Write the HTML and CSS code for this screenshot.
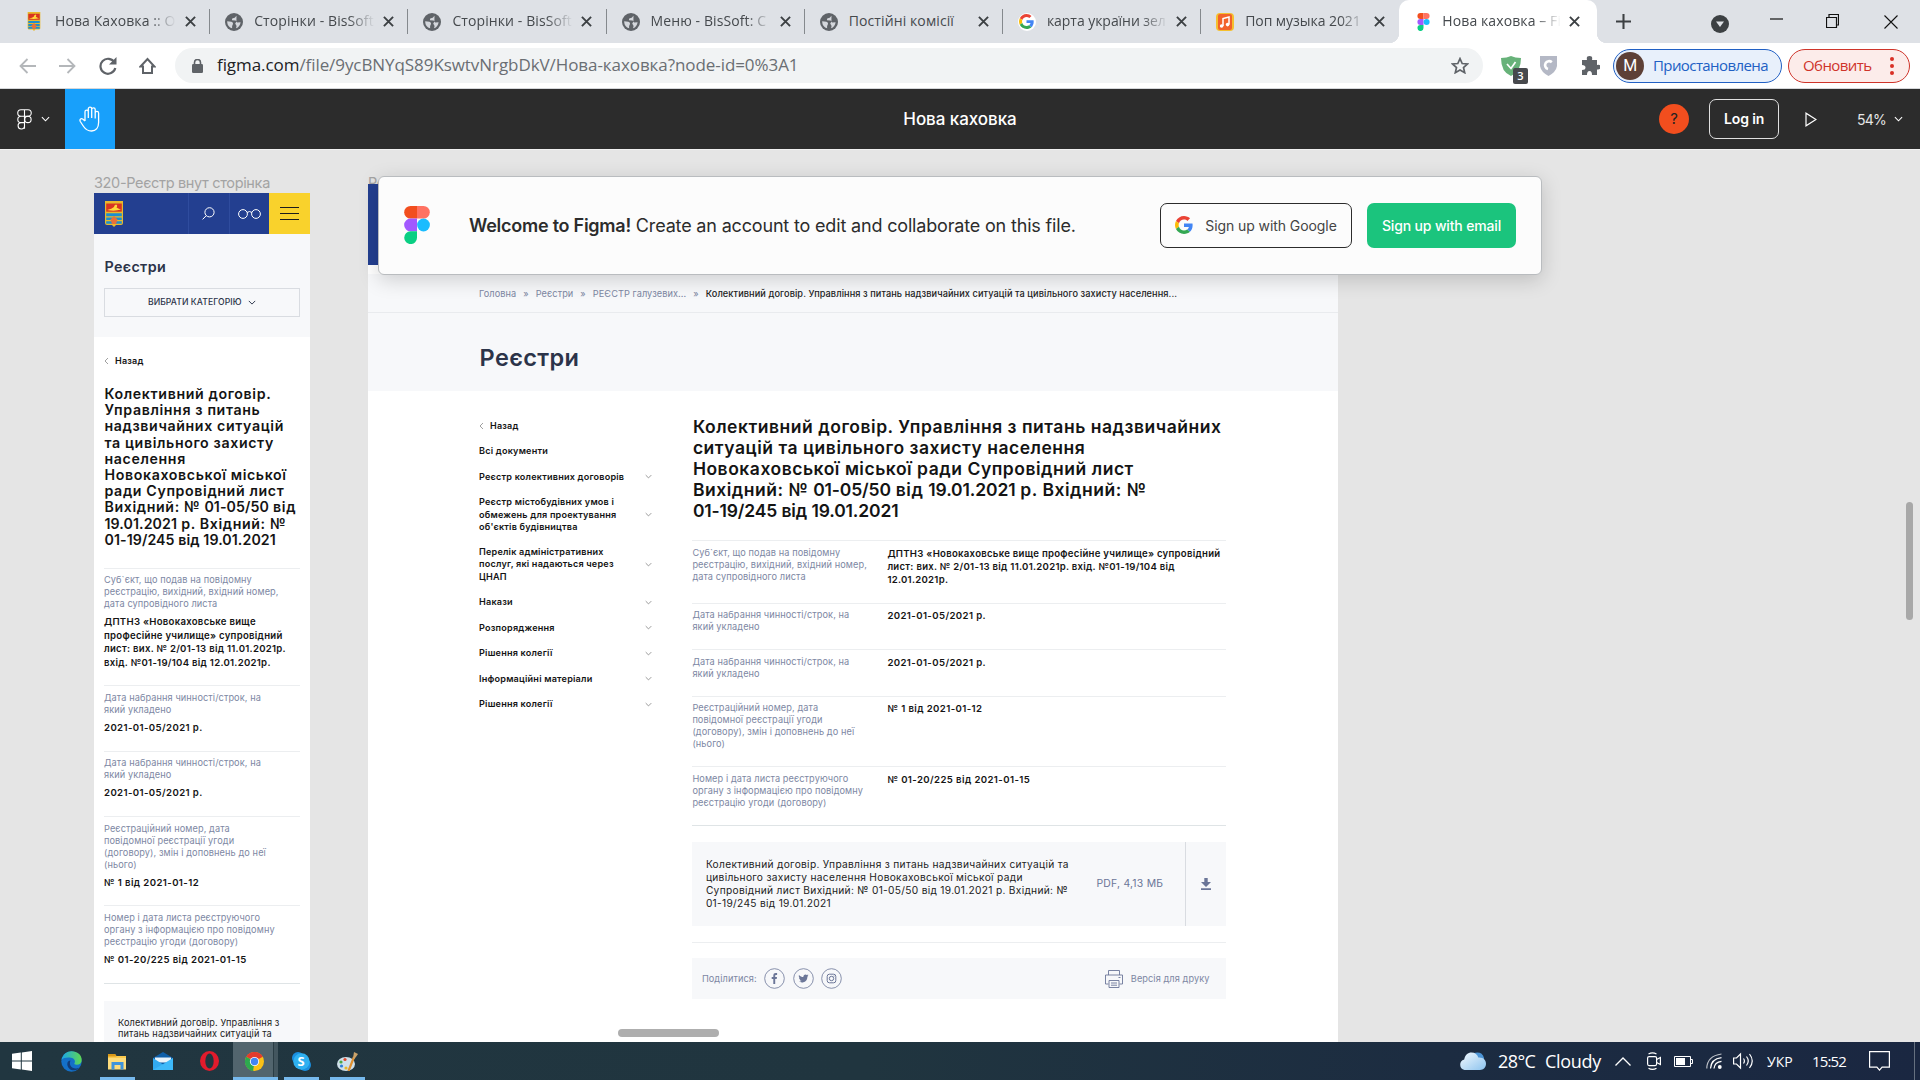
FILE: index.html
```html
<!DOCTYPE html>
<html lang="uk">
<head>
<meta charset="utf-8">
<title>Нова каховка – Figma</title>
<link rel="stylesheet" href="styles.css">
</head>
<body>
<svg class="defs" width="0" height="0">
  <defs>
    <symbol id="close" viewBox="0 0 12 12"><path d="M1 1l10 10M11 1L1 11" fill="none" stroke="#3c4043" stroke-width="2.1"/></symbol>
    <symbol id="globe" viewBox="0 0 18 18"><circle cx="9" cy="9" r="9" fill="#5f6368"/><path d="M2.2 8.2l4.2.6c1.600.8 2 1.600 1.300 2.900l-.6 1.300v2.300C4.300 14.500 2.200 12 2.200 9zM11.500 2.800l-1.800 2-2.500.7-.3 1.800 3.600.3c1 .6.8 1.700 1.800 1.900l3.300-.2c-.3 2.900-2 5.200-4.600 6l.6-2.300-1.400-2.400 1.200-1.800" fill="#dee1e6" opacity=".92"/></symbol>
    <symbol id="figma" viewBox="0 0 26 38"><path d="M6.500 0H13v12.600H6.500a6.300 6.300 0 0 1 0-12.600z" fill="#f24e1e"/><path d="M13 0h6.500a6.300 6.300 0 0 1 0 12.600H13z" fill="#ff7262"/><path d="M6.500 12.600H13v12.700H6.500a6.300 6.300 0 0 1 0-12.700z" fill="#a259ff"/><circle cx="19.500" cy="19" r="6.400" fill="#1abcfe"/><path d="M6.500 25.300H13v6.300a6.400 6.400 0 1 1-6.500-6.300z" fill="#0acf83"/></symbol>
    <symbol id="google" viewBox="0 0 48 48"><path fill="#ea4335" d="M24 9.500c3.540 0 6.710 1.220 9.210 3.600l6.850-6.850C35.900 2.380 30.470 0 24 0 14.620 0 6.510 5.380 2.560 13.220l7.980 6.190C12.430 13.720 17.740 9.500 24 9.500z"/><path fill="#4285f4" d="M46.980 24.550c0-1.570-.15-3.090-.38-4.550H24v9.020h12.940c-.58 2.960-2.260 5.480-4.780 7.180l7.730 6c4.510-4.180 7.090-10.360 7.090-17.650z"/><path fill="#fbbc05" d="M10.530 28.590A14.500 14.500 0 0 1 9.770 24c0-1.600.27-3.140.76-4.590l-7.980-6.190A23.900 23.900 0 0 0 0 24c0 3.880.92 7.540 2.560 10.780l7.970-6.190z"/><path fill="#34a853" d="M24 48c6.480 0 11.930-2.130 15.890-5.810l-7.730-6c-2.150 1.450-4.920 2.300-8.160 2.300-6.260 0-11.570-4.220-13.470-9.910l-7.980 6.190C6.510 42.620 14.620 48 24 48z"/></symbol>
    <symbol id="down" viewBox="0 0 10 6"><path d="M1 1l4 4 4-4" fill="none" stroke="currentColor" stroke-width="1.200"/></symbol>
    <symbol id="left" viewBox="0 0 5 8"><path d="M4 1L1 4l3 3" fill="none" stroke="#888" stroke-width=".8"/></symbol>
    <symbol id="crest" viewBox="0 0 18 26"><path d="M0 0h18v22q0 2-2 2h-5l-2 2-2-2H2q-2 0-2-2z" fill="#e8b92c"/><path d="M1.200 2.500h15.600v8.200H1.200z" fill="#d93422"/><path d="M1.200 12.200h15.600v3H1.200zM1.200 16.500h15.600V19H1.200zM1.200 20.300h15.600v2.500H1.200z" fill="#1c8fd0"/><path d="M2 9q5-1 7-3 0-2 2-2.500 2 .5.500 3Q14 8 16 8.500q-6 2-14 .500z" fill="#ffd93b"/><path d="M9 15l3.500 3.500L11 23H7l-1.500-4.500z" fill="#e8703a"/></symbol>
  </defs>
</svg>

<header class="tabstrip">
  <div class="tab"><svg class="fav crest" viewBox="0 0 18 26"><use href="#crest"/></svg><span class="tab-title fade">Нова Каховка :: О</span><svg class="x"><use href="#close"/></svg></div>
  <div class="tab"><svg class="fav"><use href="#globe"/></svg><span class="tab-title fade">Сторінки - BisSoft</span><svg class="x"><use href="#close"/></svg></div>
  <div class="tab"><svg class="fav"><use href="#globe"/></svg><span class="tab-title fade">Сторінки - BisSoft</span><svg class="x"><use href="#close"/></svg></div>
  <div class="tab"><svg class="fav"><use href="#globe"/></svg><span class="tab-title fade">Меню - BisSoft: С</span><svg class="x"><use href="#close"/></svg></div>
  <div class="tab"><svg class="fav"><use href="#globe"/></svg><span class="tab-title">Постійні комісії</span><svg class="x"><use href="#close"/></svg></div>
  <div class="tab"><span class="fav gbg"><svg width="15" height="15"><use href="#google"/></svg></span><span class="tab-title fade tight">карта україни зел</span><svg class="x"><use href="#close"/></svg></div>
  <div class="tab"><svg class="fav" viewBox="0 0 18 18"><rect width="18" height="18" rx="4" fill="#f5c02e"/><rect x="2" y="1" width="14" height="16" rx="2" fill="#f2622a"/><path d="M7 13V5.500l6-1.500v7.500" fill="none" stroke="#fff" stroke-width="1.500"/><circle cx="5.600" cy="13" r="1.800" fill="#fff"/><circle cx="11.600" cy="11.600" r="1.800" fill="#fff"/></svg><span class="tab-title fade tight">Поп музыка 2021</span><svg class="x"><use href="#close"/></svg></div>
  <div class="tab active"><svg class="fav"><use href="#figma"/></svg><span class="tab-title fade">Нова каховка – Fi</span><svg class="x"><use href="#close"/></svg></div>
  <svg class="plus" viewBox="0 0 16 16"><path d="M8 0v16M0 8h16" stroke="#3c4043" stroke-width="2.200"/></svg>
  <div class="window-controls">
    <svg width="18" height="18" viewBox="0 0 18 18"><circle cx="9" cy="9" r="9" fill="#3c4043"/><path d="M5 6.500h8L9 12z" fill="#dee1e6"/></svg>
    <svg width="13" height="18" viewBox="0 0 13 18"><path d="M0 6h13" stroke="#111" stroke-width="1.200"/></svg>
    <svg width="13" height="18" viewBox="0 0 13 18"><path d="M.5 5.500h10v10H.5zM3 5V2.500h9.500v10.500H11" fill="none" stroke="#111" stroke-width="1.200"/></svg>
    <svg width="14" height="18" viewBox="0 0 14 18"><path d="M.5 2.500l13 13M13.500 2.500l-13 13" stroke="#111" stroke-width="1.100"/></svg>
  </div>
</header>

<nav class="toolbar">
  <div class="nav-icons">
    <svg width="17" height="16" viewBox="0 0 17 16"><path d="M17 8H1.500M8.500 1l-7 7 7 7" fill="none" stroke="#b4b7ba" stroke-width="1.800"/></svg>
    <svg width="17" height="16" viewBox="0 0 17 16"><path d="M0 8h15.500M8.500 1l7 7-7 7" fill="none" stroke="#b4b7ba" stroke-width="1.800"/></svg>
    <svg width="18" height="18" viewBox="0 0 18 18"><path d="M15.500 5.500A7.500 7.500 0 1 0 16.300 11" fill="none" stroke="#5f6368" stroke-width="2.200"/><path d="M17.500 0v7.500H10z" fill="#5f6368"/></svg>
    <svg width="17" height="18" viewBox="0 0 17 18"><path d="M1.500 9.500L8.500 2l7 7.500H13V16H4V9.500z" fill="none" stroke="#5f6368" stroke-width="2"/></svg>
  </div>
  <div class="omnibox">
    <svg width="11" height="14" viewBox="0 0 11 14"><rect y="5" width="11" height="9" rx="1.200" fill="#5f6368"/><path d="M2.500 6V3.500a3 3 0 0 1 6 0V6" fill="none" stroke="#5f6368" stroke-width="1.600"/></svg>
    <span class="url"><b>figma.com</b>/file/9ycBNYqS89KswtvNrgbDkV/Нова-каховка?node-id=0%3A1</span>
    <svg width="18" height="17" viewBox="0 0 18 17"><path d="M9 1.600l2.200 4.900 5.300.5-4 3.500 1.200 5.200L9 13l-4.700 2.700 1.200-5.200-4-3.500 5.300-.5z" fill="none" stroke="#5f6368" stroke-width="1.700"/></svg>
  </div>
  <div class="extensions">
    <span class="guard"><svg width="20" height="20" viewBox="0 0 20 20"><path d="M0 2q6 0 10-2 4 2 10 2 0 14-10 18Q0 16 0 2z" fill="#67b279"/><path d="M6 8l4 4.500L14.500 6" fill="none" stroke="#fff" stroke-width="1.700"/></svg><i>3</i></span>
    <svg width="17" height="20" viewBox="0 0 17 20"><path d="M0 0h17v10q-1 6-8.500 10Q1 16 0 10z" fill="#b4b8c5"/><path d="M11.800 6.200A4 4 0 1 0 8 13" fill="none" stroke="#fff" stroke-width="2.600"/></svg>
    <svg width="18" height="19" viewBox="0 0 18 19"><path d="M0 4h5q-1-4 2.500-4T10 4h5v5q3.500-1 3.500 2T15 13.500V19H10q0-4-2.500-4T5 19H0v-5q3.500 0 3.500-2.500T0 9z" fill="#5f6368"/></svg>
  </div>
  <div class="pill profile"><span class="avatar">M</span><span>Приостановлена</span></div>
  <div class="pill update"><span>Обновить</span><svg width="4" height="18" viewBox="0 0 4 18"><g fill="#d93025"><circle cx="2" cy="2" r="2"/><circle cx="2" cy="9" r="2"/><circle cx="2" cy="16" r="2"/></g></svg></div>
</nav>

<div class="figbar">
  <div class="fig-left">
    <div class="menu">
      <svg width="15" height="21" viewBox="0 0 15 21"><g fill="none" stroke="#fff" stroke-width="1.100"><path d="M7.500.7v19M4 .7h7a3.200 3.200 0 0 1 0 6.500H4a3.200 3.200 0 0 1 0-6.500zM7.500 7.200H4a3.200 3.200 0 0 0 0 6.400h3.500M7.500 13.600H4a3.200 3.200 0 1 0 3.500 3.200"/><circle cx="10.900" cy="10.400" r="3.200"/></g></svg>
      <svg class="chev" width="9" height="6"><use href="#down"/></svg>
    </div>
    <div class="hand"><svg width="22" height="26" viewBox="0 0 22 26"><path d="M6 15V5.800a1.600 1.600 0 0 1 3.300 0V12 2.800a1.700 1.700 0 0 1 3.400 0V12 3.600a1.700 1.700 0 0 1 3.500 0V12.500 7a1.650 1.650 0 0 1 3.400 0v9.500c0 5.500-3 8.500-7 8.500-4.500 0-6-1.500-8-4.500L1.300 15.500c-1-2 .8-3.600 2.700-2.300L6 15" fill="none" stroke="#fff" stroke-width="1.300"/></svg></div>
  </div>
  <div class="file-name">Нова каховка</div>
  <div class="fig-right">
    <span class="help">?</span>
    <span class="login">Log in</span>
    <svg class="play" width="12" height="15" viewBox="0 0 12 15"><path d="M1 1.200v12.600L11 7.500z" fill="none" stroke="#fff" stroke-width="1.200"/></svg>
    <span class="zoom">54%</span>
    <svg class="chev" width="9" height="6"><use href="#down"/></svg>
  </div>
</div>

<main class="canvas">
  <div class="frame-name name-mobile">320-Реєстр внут сторінка</div>
  <div class="frame-name name-desktop">Реєстр внут сторінка</div>

  <section class="mobile">
    <div class="m-head">
      <div class="m-logo"><svg width="18" height="26"><use href="#crest"/></svg></div>
      <div class="m-cell"><svg width="13" height="13" viewBox="0 0 13 13"><circle cx="7.500" cy="5.300" r="4.600" fill="none" stroke="#fff"/><path d="M4.300 8.600L.6 12.400" stroke="#fff"/></svg></div>
      <div class="m-cell"><svg width="23" height="11" viewBox="0 0 23 11"><g fill="none" stroke="#fff"><circle cx="5" cy="6" r="4.400"/><circle cx="18" cy="6" r="4.400"/><path d="M9 4.500q2.500-2 5 0"/></g></svg></div>
      <div class="m-cell burger"><i></i><i></i><i></i></div>
    </div>
    <div class="m-hero">
      <h2>Реєстри</h2>
      <div class="select">ВИБРАТИ КАТЕГОРІЮ <svg width="8" height="5"><use href="#down"/></svg></div>
    </div>
    <div class="m-body">
      <div class="back"><svg width="5" height="8"><use href="#left"/></svg>Назад</div>
      <h1>Колективний договір.<br>Управління з питань<br>надзвичайних ситуацій<br>та цивільного захисту<br>населення<br>Новокаховської міської<br>ради Супровідний лист<br>Вихідний: № <span>01-05/50</span> від<br><span>19.01.2021</span> р. Вхідний: №<br><span>01-19/245 від 19.01.2021</span></h1>
      <dl>
        <div class="r1"><dt>Суб`єкт, що подав на повідомну<br>реєстрацію, вихідний, вхідний номер,<br>дата супровідного листа</dt><dd>ДПТНЗ «Новокаховське вище<br>професійне училище» супровідний<br>лист: вих. № 2/01-13 від 11.01.2021р.<br>вхід. №01-19/104 від 12.01.2021р.</dd></div>
        <div class="r2"><dt>Дата набрання чинності/строк, на<br>який укладено</dt><dd>2021-01-05/2021 р.</dd></div>
        <div class="r3"><dt>Дата набрання чинності/строк, на<br>який укладено</dt><dd>2021-01-05/2021 р.</dd></div>
        <div class="r4"><dt>Реєстраційний номер, дата<br>повідомної реєстрації угоди<br>(договору), змін і доповнень до неї<br>(нього)</dt><dd>№ 1 від 2021-01-12</dd></div>
        <div class="r5"><dt>Номер і дата листа реєструючого<br>органу з інформацією про повідомну<br>реєстрацію угоди (договору)</dt><dd>№ 01-20/225 від 2021-01-15</dd></div>
      </dl>
      <div class="m-file">Колективний договір. Управління з<br>питань надзвичайних ситуацій та</div>
    </div>
  </section>

  <section class="desktop">
    <div class="d-head"></div>
    <div class="crumbs"><span>Головна</span><i>»</i><span>Реєстри</span><i>»</i><span>РЕЄСТР галузевих...</span><i>»</i><b>Колективний договір. Управління з питань надзвичайних ситуацій та цивільного захисту населення...</b></div>
    <div class="d-hero"><h2>Реєстри</h2></div>
    <div class="d-body">
      <aside>
        <div class="back"><svg width="5" height="8"><use href="#left"/></svg>Назад</div>
        <div class="item">Всі документи</div>
        <div class="item">Реєстр колективних договорів<svg><use href="#down"/></svg></div>
        <div class="item">Реєстр містобудівних умов і<br>обмежень для проектування<br>об'єктів будівництва<svg><use href="#down"/></svg></div>
        <div class="item">Перелік адміністративних<br>послуг, які надаються через<br>ЦНАП<svg><use href="#down"/></svg></div>
        <div class="item">Накази<svg><use href="#down"/></svg></div>
        <div class="item">Розпорядження<svg><use href="#down"/></svg></div>
        <div class="item">Рішення колегії<svg><use href="#down"/></svg></div>
        <div class="item">Інформаційні матеріали<svg><use href="#down"/></svg></div>
        <div class="item">Рішення колегії<svg><use href="#down"/></svg></div>
      </aside>
      <article>
        <h1>Колективний договір. Управління з питань надзвичайних<br>ситуацій та цивільного захисту населення<br>Новокаховської міської ради Супровідний лист<br>Вихідний: № <span>01-05/50</span> від <span>19.01.2021</span> р. Вхідний: №<br><span>01-19/245 від 19.01.2021</span></h1>
        <dl>
          <div class="r1"><dt>Суб`єкт, що подав на повідомну<br>реєстрацію, вихідний, вхідний номер,<br>дата супровідного листа</dt><dd>ДПТНЗ «Новокаховське вище професійне училище» супровідний<br>лист: вих. № 2/01-13 від 11.01.2021р. вхід. №01-19/104 від<br>12.01.2021р.</dd></div>
          <div class="r2"><dt>Дата набрання чинності/строк, на<br>який укладено</dt><dd>2021-01-05/2021 р.</dd></div>
          <div class="r3"><dt>Дата набрання чинності/строк, на<br>який укладено</dt><dd>2021-01-05/2021 р.</dd></div>
          <div class="r4"><dt>Реєстраційний номер, дата<br>повідомної реєстрації угоди<br>(договору), змін і доповнень до неї<br>(нього)</dt><dd>№ 1 від 2021-01-12</dd></div>
          <div class="r5"><dt>Номер і дата листа реєструючого<br>органу з інформацією про повідомну<br>реєстрацію угоди (договору)</dt><dd>№ 01-20/225 від 2021-01-15</dd></div>
        </dl>
        <div class="file">
          <p>Колективний договір. Управління з питань надзвичайних ситуацій та<br>цивільного захисту населення Новокаховської міської ради<br>Супровідний лист Вихідний: № 01-05/50 від 19.01.2021 р. Вхідний: №<br>01-19/245 від 19.01.2021</p>
          <span>PDF, 4,13 МБ</span>
          <div class="dl"><svg width="10" height="12" viewBox="0 0 10 12"><path d="M3.300 0h3.400v4H10L5 9 0 4h3.300zM0 10.300h10V12H0z" fill="#6b7698"/></svg></div>
        </div>
        <hr>
        <div class="share">
          <span>Поділитися:</span>
          <svg width="21" height="21" viewBox="0 0 21 21"><circle cx="10.500" cy="10.500" r="9.800" fill="none" stroke="#6b7698" stroke-width=".8"/><path d="M9.300 16v-5H7.700V9h1.600V7.600c0-1.700 1-2.500 2.400-2.500h1.400V7h-1c-.7 0-.9.400-.9.900V9H13l-.3 2h-1.500v5z" fill="#6b7698"/></svg>
          <svg width="21" height="21" viewBox="0 0 21 21"><circle cx="10.500" cy="10.500" r="9.800" fill="none" stroke="#6b7698" stroke-width=".8"/><path d="M6 7c1.400 1.500 2.700 2 4.300 2 0-2.200 2.200-3.200 3.600-1.900l1.400-.5-.7 1.200.8-.2-1 1.100c0 5-4.800 7-8.600 4.900 1.200 0 2-.2 2.700-.8-1-.1-1.500-.6-1.800-1.400h.8c-1-.4-1.500-1-1.500-2l.7.200C5.800 8.900 5.500 8 6 7z" fill="#6b7698"/></svg>
          <svg width="21" height="21" viewBox="0 0 21 21"><g fill="none" stroke="#6b7698"><circle cx="10.500" cy="10.500" r="9.800" stroke-width=".8"/><rect x="6.200" y="6.200" width="8.600" height="8.600" rx="2.200"/><circle cx="10.500" cy="10.500" r="2.200"/></g><circle cx="13" cy="8" r=".6" fill="#6b7698"/></svg>
          <div class="print"><svg width="18" height="18" viewBox="0 0 18 18"><path d="M3.500 5V.5h11V5M3.500 14H.5V5h17v9h-3M4 10.500h10v7H4zM6 13h6M6 15.200h6M13.500 7.500h2" fill="none" stroke="#6b7698" stroke-width=".9"/></svg>Версія для друку</div>
        </div>
      </article>
    </div>
  </section>

  <div class="banner">
    <svg width="26" height="38"><use href="#figma"/></svg>
    <p><b>Welcome to Figma!</b> <span>Create an account to edit and collaborate on this file.</span></p>
    <div class="btn outline"><svg width="18" height="18"><use href="#google"/></svg>Sign up with Google</div>
    <div class="btn green">Sign up with email</div>
  </div>
  <div class="scroll-h"></div>
  <div class="scroll-v"></div>
</main>

<footer class="taskbar">
  <div class="apps">
    <div class="app start"><svg width="20" height="20" viewBox="0 0 20 20"><path d="M0 2.800l8.800-1.200v8H0zM9.800 1.500L20 0v9.600H9.800zM0 10.500h8.800v8L0 17.300zM9.800 10.500H20V20L9.800 18.600z" fill="#fff"/></svg></div>
    <div class="app"><svg width="21" height="21" viewBox="0 0 21 21"><defs><linearGradient id="eg"><stop stop-color="#1ba5e8"/><stop offset="1" stop-color="#5fd850"/></linearGradient></defs><circle cx="10.500" cy="10.500" r="10.200" fill="#1470c8"/><path d="M.5 9C2 3 6 .3 10.500.3 16.500.3 20.700 4 20.700 9c0 3-2 4.800-5 4.800-2 0-3-.7-2-2 .8-1.500 0-4.500-3.700-5C6 6.200 2 7 .5 9z" fill="url(#eg)"/><path d="M9.500 9.500c-2 4 1 8.500 6 8 1.500-.2 3-.8 3-.8-4 4-9 3-11 0s-1.500-7 2-7.200z" fill="#123c78"/></svg></div>
    <div class="app open"><svg width="19" height="17" viewBox="0 0 19 17"><path d="M0 1h7l1.500 2H18v13H0z" fill="#fbc94c"/><path d="M0 1h7l1.500 2.500H0z" fill="#d99818"/><path d="M0 5h18v11.500H0z" fill="#fddc7c"/><path d="M3.500 16.500V9h12v7.500h-3V12h-6v4.500z" fill="#3e93dc"/></svg></div>
    <div class="app"><svg width="20" height="18" viewBox="0 0 20 18"><path d="M0 6l10-6 10 6v12H0z" fill="#0f5fa8"/><path d="M2 5.500h16v5H2z" fill="#e9f3fa"/><path d="M0 6l10 6.500L20 6v12H0z" fill="#32aaf0"/><path d="M0 18L20 6v12z" fill="#45c3ff" opacity=".6"/></svg></div>
    <div class="app"><svg width="19" height="20" viewBox="0 0 19 20"><ellipse cx="9.500" cy="10" rx="9.500" ry="10" fill="#e21b2c"/><ellipse cx="9.500" cy="10" rx="4.200" ry="7.600" fill="#213640"/></svg></div>
    <div class="app chrome"><svg width="19" height="19" viewBox="0 0 20 20"><circle cx="10" cy="10" r="10" fill="#fbc116"/><path d="M10 10L1.300 5A10 10 0 0 1 18.700 5z" fill="#e33b2e"/><path d="M10 10L1.300 5a10 10 0 0 0 7.200 14.900z" fill="#2da94f"/><circle cx="10" cy="10" r="4.800" fill="#fff"/><circle cx="10" cy="10" r="3.900" fill="#4285f4"/></svg></div>
    <div class="app open skype"><svg width="19" height="19" viewBox="0 0 19 19"><circle cx="6" cy="6" r="6" fill="#1a8fe0"/><circle cx="13" cy="13" r="6" fill="#1a8fe0"/><circle cx="9.500" cy="9.500" r="8.200" fill="#2fb0f0"/></svg><b>S</b></div>
    <div class="app open"><svg width="21" height="19" viewBox="0 0 21 19"><ellipse cx="9" cy="12" rx="9" ry="7" fill="#cfe0ea"/><circle cx="4" cy="10" r="1.600" fill="#4aa845"/><circle cx="8" cy="7.500" r="1.600" fill="#e04a2e"/><circle cx="4.500" cy="14" r="1.600" fill="#2d7fd8"/><circle cx="9" cy="16" r="1.600" fill="#e8b92c"/><path d="M11.500 19L17 5" stroke="#e09030" stroke-width="2.200"/><path d="M16 6l1-6 4 2-3.500 5z" fill="#c9a26a"/></svg></div>
  </div>
  <div class="tray">
    <svg class="cloud" width="27" height="18" viewBox="0 0 27 18"><defs><linearGradient id="cg" x1="0" x2="1" y2="1"><stop stop-color="#f4faff"/><stop offset="1" stop-color="#8cc3ee"/></linearGradient></defs><path d="M15 1q8-2 10 5v6H12z" fill="#4d95d6"/><path d="M5.500 18a5.400 5.400 0 0 1-.3-10.500C6 3 9 .5 12.500.5c3.500 0 6 2 6.800 5C24 5 27 8 27 11.800c0 3.500-2.500 6.200-6 6.200z" fill="url(#cg)"/></svg>
    <span class="temp">28°C</span><span class="cond">Cloudy</span>
    <svg class="t-chev" width="16" height="9" viewBox="0 0 16 9"><path d="M.5 8.500L8 1l7.500 7.500" fill="none" stroke="#fff" stroke-width="1.300"/></svg>
    <svg class="t-meet" width="14" height="18" viewBox="0 0 14 18"><g fill="none" stroke="#fff" stroke-width="1.200"><rect x=".6" y="4.600" width="9" height="9" rx="1.500"/><path d="M9.600 7.500l3.800-2v7l-3.800-2M1.500 2q4-2.400 8 0M1.500 16.200q4 2.400 8 0"/></g></svg>
    <svg class="t-bat" width="19" height="11" viewBox="0 0 19 11"><path d="M.5.500h16v10H.5zM17 3.500h1.500v4H17" fill="none" stroke="#fff"/><path d="M2 2h9v7H2z" fill="#fff"/></svg>
    <svg class="t-wifi" width="16" height="16" viewBox="0 0 16 16"><g fill="none" stroke="#fff" stroke-width="1.200"><path d="M.8 15.500Q1 3 15.500 1" opacity=".7"/><path d="M4.500 15.500Q5 6 15.500 4.700M8 15.500Q8.500 9 15.500 8.300"/></g><circle cx="13.800" cy="14" r="1.900" fill="#fff"/></svg>
    <svg class="t-vol" width="21" height="18" viewBox="0 0 21 18"><g fill="none" stroke="#fff" stroke-width="1.200"><path d="M.6 6h2.900l4-4v14l-4-4H.6z"/><path d="M10.500 6.500q1.800 2.500 0 5M13.500 4.500q3.500 4.500 0 9M16.500 2q5.500 7 0 14"/></g></svg>
    <span class="lang">УКР</span><span class="clock">15:52</span>
    <svg class="t-note" width="21" height="20" viewBox="0 0 21 20"><path d="M.6.600h19.800v15.500h-7.300l-2.600 3-2.600-3H.6z" fill="none" stroke="#fff" stroke-width="1.200"/></svg>
    <i class="peek"></i>
  </div>
</footer>
</body>
</html>
```
FILE: styles.css
```css
* { box-sizing: border-box; }
body { margin: 0; width: 1920px; height: 1080px; overflow: hidden; display: flex; flex-direction: column; font-family: "Inter", sans-serif; }
h1, h2, p, dl, dd, dt { margin: 0; }
svg { flex: none; display: block; }
.defs { position: absolute; }

/* browser tabs */
.tabstrip { height: 43px; background: #dee1e6; display: flex; align-items: center; padding-left: 12px; font-family: "Open Sans", sans-serif; }
.tab { width: 198.200px; height: 43px; display: flex; align-items: center; padding-left: 15px; position: relative; flex: none; }
.tab:not(.active)::after { content: ""; position: absolute; right: 0; top: 9px; width: 1px; height: 25px; background: #85898d; }
.tab:nth-child(7)::after { display: none; }
.active { background: #fff; border-radius: 10px 10px 0 0; width: 198px; padding-left: 18px; }
.active::before { content: ""; position: absolute; left: -10px; bottom: 0; width: 218px; height: 10px; background: radial-gradient(circle at 0 0, transparent 10px, #fff 10.500px) left / 10px 10px no-repeat, radial-gradient(circle at 100% 0, transparent 10px, #fff 10.500px) right / 10px 10px no-repeat; }
.fav { width: 18px; height: 18px; margin-right: 11px; }
.crest.fav { width: 14px; height: 19px; margin-right: 14px; }
.gbg { background: #fff; border-radius: 50%; display: grid; place-items: center; flex: none; }
.active .fav { width: 13px; margin-right: 12px; }
.tab-title { width: 121px; font-size: 14px; letter-spacing: .1px; color: #45494d; white-space: nowrap; overflow: hidden; line-height: 20px; padding-bottom: 1px; }
.tight { letter-spacing: -.05px; }
.active .tab-title { width: 119px; }
.fade { -webkit-mask-image: linear-gradient(90deg, #000 78%, transparent 100%); mask-image: linear-gradient(90deg, #000 78%, transparent 100%); }
.x { width: 11px; height: 11px; margin-left: 8px; }
.crest ~ .x { margin-left: 9px; }
.plus { width: 15px; height: 15px; margin-left: 19px; }
.window-controls { margin-left: auto; display: flex; align-items: center; padding-right: 22px; height: 38px; }
.window-controls svg:nth-child(1) { margin-top: 5px; }
.window-controls svg:nth-child(2) { margin: 1px 43px 0 41px; }
.window-controls svg:nth-child(3) { margin: -2px 45px 0 0; }

/* address bar */
.toolbar { height: 46px; background: #fff; border-bottom: 1px solid #d5d7da; display: flex; align-items: center; font-family: "Open Sans", sans-serif; }
.nav-icons { display: flex; align-items: center; gap: 23px; padding-left: 19px; width: 175px; }
.nav-icons svg:nth-child(4) { margin-left: -1px; }
.omnibox { width: 1308px; height: 35px; border-radius: 18px; background: #f1f3f4; display: flex; align-items: center; padding: 0 14px 0 17px; }
.url { flex: 1; margin-left: 14px; font-size: 17px; letter-spacing: -.07px; color: #6a6e73; line-height: 24px; padding-bottom: 1px; }
.url b { font-weight: 400; color: #202124; }
.extensions { display: flex; align-items: center; gap: 19px; width: 130px; padding-left: 18px; }
.extensions svg:nth-child(3) { margin-left: 6px; }
.guard { position: relative; width: 20px; height: 20px; }
.guard i { position: absolute; left: 12px; top: 12px; width: 15px; height: 16px; background: #47494d; border-radius: 2px; color: #fff; font: 600 11px/16px "Open Sans", sans-serif; text-align: center; }
.pill { height: 34px; border-radius: 17px; display: flex; align-items: center; font-size: 15px; letter-spacing: -.59px; border: 1.500px solid; }
.pill > span:not(.avatar) { padding-bottom: 2px; }
.profile { width: 169px; background: #e8f0fb; color: #2160c4; padding-left: 2px; }
.avatar { width: 28px; height: 28px; border-radius: 50%; background: #5d4037; color: #fff; text-align: center; line-height: 28px; font-family: "Roboto", sans-serif; font-size: 16px; margin-right: 9px; }
.update { width: 122px; margin-left: 6px; background: #fcecea; color: #cf342a; padding: 0 15px 0 14px; justify-content: space-between; }

/* editor bar */
.figbar { height: 60px; background: #2c2c2c; display: grid; grid-template-columns: 1fr auto 1fr; align-items: center; color: #fff; }
.fig-left { display: flex; height: 60px; }
.menu { width: 65px; display: flex; align-items: center; padding-left: 17px; gap: 9px; }
.hand { width: 50px; background: #18a0fb; display: grid; place-items: center; }
.file-name { font-size: 17px; font-weight: 500; letter-spacing: -.05px; }
.fig-right { display: flex; align-items: center; justify-content: flex-end; padding-right: 17px; }
.help { width: 30px; height: 30px; border-radius: 50%; background: #f24e1e; color: #222; font-size: 15px; line-height: 30px; text-align: center; }
.login { margin-left: 20px; width: 70px; height: 40px; border: 1px solid #e0e0e0; border-radius: 7px; font-size: 14px; font-weight: 600; letter-spacing: -.16px; line-height: 37px; text-align: center; }
.play { margin-left: 26px; }
.zoom { margin: 0 8px 0 40px; font-size: 14px; letter-spacing: -.8px; color: #e6e6e6; }

/* canvas; frames are placed freely on it */
.canvas { flex: 1; position: relative; overflow: hidden; background: #e5e5e5; border-top: 1px solid #f0f0f0; }
.frame-name { position: absolute; top: 24px; font-size: 14.500px; letter-spacing: -.34px; line-height: 18px; color: #a3a3a3; white-space: nowrap; }
.name-mobile { left: 94px; }
.name-desktop { left: 368px; }
.mobile { position: absolute; left: 94px; top: 43px; width: 215.500px; height: 900px; background: #fff; }
.m-head { height: 41px; background: #233f90; display: flex; align-items: center; }
.m-logo { flex: 1; padding-left: 11px; }
.m-cell { width: 40.500px; height: 41px; border-left: 1px solid #2f4c9e; display: flex; align-items: center; justify-content: center; }
.burger { background: #f9d22c; border: 0; flex-direction: column; gap: 5px; }
.burger i { width: 19px; height: 1px; background: #1c1c1c; }
.m-hero { height: 103px; background: #f7f8fa; padding: 23px 10px 0; }
h2 { color: #2c3449; font-weight: 600; }
.m-hero h2 { font-size: 14.300px; letter-spacing: .35px; line-height: 20px; padding-left: .5px; }
.select { margin-top: 11px; height: 29px; border: 1px solid #d9dce1; display: flex; align-items: center; justify-content: center; gap: 6px; color: #2c3449; font-size: 8.600px; font-weight: 500; letter-spacing: .08px; padding-bottom: 1px; }
.m-body { padding: 18px 10px 0; }
.back { display: flex; align-items: center; gap: 6px; font-size: 9px; font-weight: 600; letter-spacing: .2px; line-height: 12px; color: #141414; }
h1 { font-weight: 600; color: #141414; white-space: nowrap; }
.m-body h1 { margin-top: 19px; font-size: 14.200px; letter-spacing: .62px; line-height: 16.200px; height: 181.500px; padding-left: .5px; }
.m-body h1 span { letter-spacing: .08px; }
dl > div { border-top: 1px solid #eceef0; }
dl { border-bottom: 1px solid #dfe4e6; color: #141414; }
dt { font-size: 9.200px; letter-spacing: .09px; line-height: 12.100px; color: #7d87a3; white-space: nowrap; }
dd { font-size: 9.600px; font-weight: 600; letter-spacing: .27px; line-height: 13.400px; white-space: nowrap; }
.r2 dd, .r3 dd, .r4 dd, .r5 dd { letter-spacing: .4px; }
.mobile dl > div { padding-top: 5.500px; }
.mobile dd { margin-top: 5px; }
.mobile .r1 { height: 117.500px; }
.mobile .r2, .mobile .r3 { height: 65.500px; }
.mobile .r4 { height: 89px; }
.mobile .r5 { height: 78px; }
.m-file { margin-top: 16.500px; height: 120px; background: #f7f8fa; padding: 16px 14px; font-size: 9.200px; letter-spacing: .13px; line-height: 11.600px; color: #222; white-space: nowrap; }

.desktop { position: absolute; left: 368px; top: 34px; width: 969.500px; height: 900px; background: #fff; }
.d-head { height: 81px; background: #233f90; margin-bottom: 9px; }
.crumbs { height: 39px; background: #f7f8fa; border-bottom: 1px solid #e9ebee; display: flex; align-items: center; padding-left: 111px; font-size: 9.200px; color: #7d87a3; letter-spacing: .08px; white-space: nowrap; }
.crumbs b { font-weight: 500; color: #222; letter-spacing: .085px; }
.crumbs i { font-style: normal; margin: 0 7px; }
.d-hero { height: 78px; background: #f7f8fa; padding: 30px 0 0 111.500px; }
.d-hero h2 { font-size: 23.500px; letter-spacing: .4px; line-height: 30px; }
.d-body { display: flex; padding: 29px 112px 0 111px; }
aside { width: 213.500px; padding-right: 40.500px; }
.item { position: relative; margin-top: 13.300px; font-size: 9.100px; font-weight: 600; letter-spacing: .2px; line-height: 12.200px; color: #141414; display: flex; align-items: center; justify-content: space-between; white-space: nowrap; }
.item svg { width: 7px; height: 5px; color: #888; }
article { width: 533.500px; }
article h1 { font-size: 17.500px; letter-spacing: .52px; line-height: 20.900px; margin: -3px 0 0 .5px; height: 123px; }
article h1 span { letter-spacing: -.14px; }
article dl > div { display: flex; padding-top: 5.500px; }
article dt { width: 195px; }
article dd { padding-top: 0; }
article .r1 { height: 62.700px; }
article .r2, article .r3 { height: 46.500px; }
article .r4 { height: 70.500px; }
article .r5 { height: 58.800px; }
.file { margin-top: 16px; height: 84px; background: #f7f8fa; display: flex; align-items: center; padding-left: 13.500px; }
.file p { width: 390.500px; font-size: 10.200px; letter-spacing: .3px; line-height: 12.800px; color: #222; white-space: nowrap; }
.file span { flex: 1; font-size: 10.400px; letter-spacing: .25px; color: #6b7698; }
.dl { width: 41px; height: 84px; border-left: 1px solid #d9dce1; display: grid; place-items: center; }
hr { border: 0; border-top: 1px solid #eceef0; margin: 16px 0 15.500px; }
.share { height: 40.500px; background: #f7f8fa; display: flex; align-items: center; padding: 0 16px 0 9.500px; font-size: 9.200px; letter-spacing: .08px; color: #7d87a3; gap: 7.500px; }
.print { margin-left: auto; display: flex; align-items: center; gap: 8px; }

.banner { position: absolute; left: 378px; top: 26px; width: 1164px; height: 99px; background: #fcfcfc; border: 1px solid #b9bcbf; border-radius: 6px; box-shadow: 0 5px 20px rgba(0,0,0,.17); display: flex; align-items: center; padding: 0 25px 1px 25px; color: #2c2c2c; }
.banner p { flex: 1; margin-left: 39px; font-size: 18px; letter-spacing: -.17px; white-space: nowrap; }
.banner b { font-weight: 600; letter-spacing: -.25px; }
.btn { height: 45px; border-radius: 7px; font-size: 14px; display: flex; align-items: center; justify-content: center; letter-spacing: -.08px; }
.outline { width: 192px; border: 1px solid #2c2c2c; gap: 12px; color: #444; }
.green { width: 149px; margin-left: 15px; background: #1bc47d; color: #fff; font-weight: 500; letter-spacing: -.16px; }
.scroll-h { position: absolute; left: 618px; top: 879px; width: 101px; height: 8px; border-radius: 4px; background: #aeaeae; }
.scroll-v { position: absolute; left: 1906px; top: 352px; width: 7px; height: 118px; border-radius: 4px; background: #a8a8a8; }

/* taskbar */
.taskbar { height: 38px; background: linear-gradient(90deg, #213640, #20353f 45%, #1c2c41 75%, #1a2741); display: flex; justify-content: space-between; color: #fff; font-family: "Open Sans", sans-serif; }
.apps { display: flex; }
.app { width: 46px; height: 38px; display: grid; place-items: center; position: relative; }
.start { width: 48px; padding-right: 4px; }
.open::after { content: ""; position: absolute; bottom: 0; left: 6px; width: 35px; height: 3px; background: #76b9ed; }
.chrome { width: 45px; margin: 0 0 0 1px; background: linear-gradient(90deg, #52656e 40px, #2a3d45 40px 41px, #43565f 41px); border-bottom: 3px solid #76b9ed; padding: 3px 2px 0 0; }
.skype b { position: absolute; font: 700 13px "Open Sans", sans-serif; }
.tray { display: flex; align-items: center; font-size: 18px; padding-right: 5px; }
.temp { margin-left: 12px; width: 47px; letter-spacing: -.6px; }
.cond { width: 70px; letter-spacing: -.3px; }
.t-meet { margin-left: 16px; }
.t-bat { margin-left: 13px; }
.t-wifi { margin-left: 13px; }
.t-vol { margin-left: 11px; }
.lang { margin-left: 13px; width: 45px; font-size: 14px; }
.clock { width: 57px; font-size: 15px; letter-spacing: -.85px; }
.peek { width: 1px; height: 38px; background: #65707f; margin-left: 24px; }
```
